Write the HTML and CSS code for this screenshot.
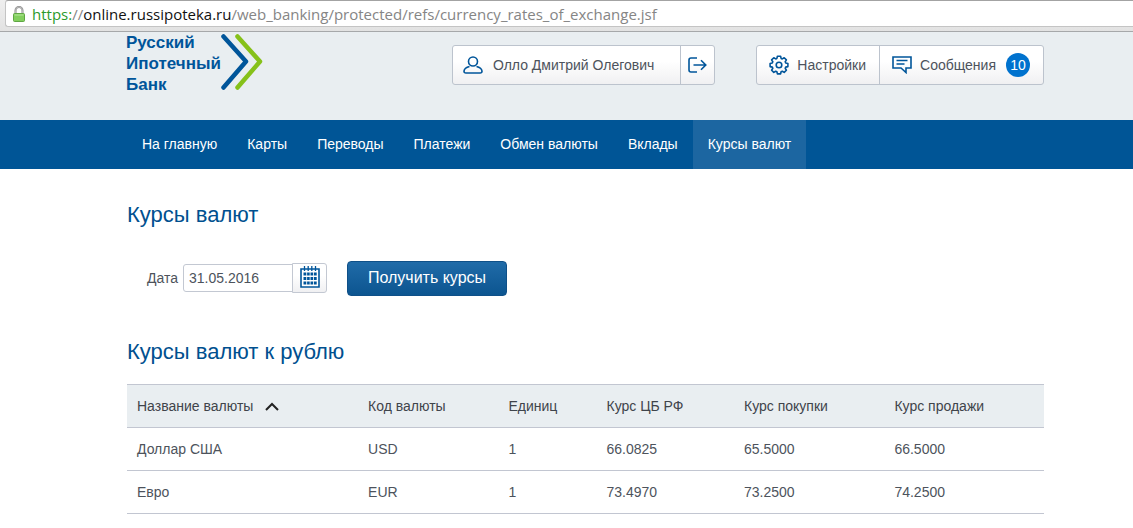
FILE: index.html
```html
<!DOCTYPE html>
<html lang="ru">
<head>
<meta charset="utf-8">
<title>Курсы валют</title>
<link rel="stylesheet" href="styles.css">
</head>
<body>
<div class="browser">
  <div class="address">
    <svg class="lock" width="12" height="16" viewBox="0 0 12 16" aria-hidden="true">
      <path d="M2.500 8V4.500a3.500 3.500 0 0 1 7 0V8" fill="none" stroke="#8b8b8b" stroke-width="2"/>
      <path d="M2.500 8V4.500a3.500 3.500 0 0 1 7 0V8" fill="none" stroke="#d8d8d8" stroke-width=".6"/>
      <rect x=".5" y="7.500" width="11" height="8" rx="1" fill="#82cf5e" stroke="#5fa643"/>
      <path d="M1.500 9h9" stroke="#b4e69a"/>
    </svg>
    <span class="url"><span class="scheme">https:</span>//<span class="host">online.russipoteka.ru</span>/web_banking/protected/refs/currency_rates_of_exchange.jsf</span>
  </div>
</div>

<header class="header">
  <a class="logo" href="#">
    <span class="logo-name">Русский<br>Ипотечный<br>Банк</span>
    <svg class="logo-mark" width="42" height="58" viewBox="0 0 42 58" aria-hidden="true">
      <g fill="none" stroke-width="4.500" stroke-linecap="round" stroke-linejoin="round">
        <path d="M16.500 4.500 39 29.500 16.500 55.500" stroke="#86c11a"/>
        <path d="M2.500 4.500 25 29.500 2.500 55.500" stroke="#00559a"/>
      </g>
    </svg>
  </a>
  <div class="tools">
    <div class="group">
      <button class="tool user" type="button">
        <svg width="20" height="18" viewBox="0 0 20 18" fill="none" stroke="#00559a" stroke-width="1.600" aria-hidden="true">
          <circle cx="10" cy="5.500" r="4.500"/>
          <path d="M6.500 10.500C3 11.300 1.300 12.700 1 15c-.1 1.200.7 2 1.900 2h14.200c1.200 0 2-.8 1.900-2-.3-2.300-2-3.700-5.500-4.500"/>
        </svg>
        <span>Олло Дмитрий Олегович</span>
      </button>
      <button class="tool exit" type="button" aria-label="Выйти">
        <svg width="20" height="16" viewBox="0 0 20 16" fill="none" stroke="#00559a" stroke-width="1.600" aria-hidden="true">
          <path d="M9 1H3Q1 1 1 3v10q0 2 2 2H9M5.500 8h12M13 3.200 17.800 8 13 12.800"/>
        </svg>
      </button>
    </div>
    <div class="group">
      <button class="tool settings" type="button">
        <svg width="20" height="20" viewBox="0 0 20 20" fill="none" stroke="#00559a" stroke-width="1.600" stroke-linejoin="round" aria-hidden="true">
          <circle cx="10" cy="10" r="2.800"/>
          <path d="M8.400 1.200h3.200l.5 2.200 1.200.5 1.900-1.200 2.200 2.200-1.200 1.900.5 1.200 2.200.5v3.100l-2.200.5-.5 1.200 1.200 1.900-2.200 2.200-1.900-1.200-1.200.5-.5 2.200H8.400l-.5-2.200-1.200-.5-1.900 1.200-2.200-2.200 1.200-1.900-.5-1.200-2.200-.5V8.500l2.200-.5.500-1.200-1.200-1.900 2.200-2.200 1.900 1.200 1.200-.5z"/>
        </svg>
        <span>Настройки</span>
      </button>
      <button class="tool messages" type="button">
        <svg width="20" height="18" viewBox="0 0 20 18" fill="none" stroke="#00559a" stroke-width="1.600" aria-hidden="true">
          <path d="M1 1h18v11h-5v4.500L9 12H1zM4.500 4.500h11M4.500 8h8"/>
        </svg>
        <span>Сообщения</span>
        <span class="badge">10</span>
      </button>
    </div>
  </div>
</header>

<nav class="nav">
  <a href="#">На главную</a>
  <a href="#">Карты</a>
  <a href="#">Переводы</a>
  <a href="#">Платежи</a>
  <a href="#">Обмен валюты</a>
  <a href="#">Вклады</a>
  <a class="active" href="#" aria-current="page">Курсы валют</a>
</nav>

<main class="content">
  <h1 class="title">Курсы валют</h1>
  <form class="filter">
    <label for="date">Дата</label>
    <div class="date-field">
      <input id="date" type="text" value="31.05.2016">
      <button class="calendar" type="button" aria-label="Открыть календарь">
        <svg width="20" height="22" viewBox="0 0 20 22" aria-hidden="true">
          <path d="M1 3h18v18H1z" fill="#fff" stroke="#00559a" stroke-width="1.600"/>
          <path d="M4.500 0v5M8.200 0v5M11.800 0v5M15.500 0v5" stroke="#00559a" stroke-width="1.300"/>
          <path d="M3.500 8h2.800M7.100 8h2.600M10.500 8h2.600M13.900 8h2.800M3.500 12.500h2.800M7.100 12.500h2.600M10.500 12.500h2.600M13.900 12.500h2.800M3.500 17h2.800M7.100 17h2.600M10.500 17h2.600M13.900 17h2.800" stroke="#00559a" stroke-width="3"/>
        </svg>
      </button>
    </div>
    <button class="submit" type="button">Получить курсы</button>
  </form>

  <h2 class="title">Курсы валют к рублю</h2>
  <table class="rates">
    <colgroup><col class="c-name"><col class="c-code"><col class="c-unit"><col class="c-cb"><col class="c-buy"><col></colgroup>
    <thead>
      <tr>
        <th scope="col" aria-sort="ascending">Название валюты
          <svg class="sort" width="14" height="9" viewBox="0 0 14 9" aria-hidden="true"><path d="M1 8l6-6 6 6" fill="none" stroke="#222" stroke-width="2"/></svg>
        </th>
        <th scope="col">Код валюты</th>
        <th scope="col">Единиц</th>
        <th scope="col">Курс ЦБ РФ</th>
        <th scope="col">Курс покупки</th>
        <th scope="col">Курс продажи</th>
      </tr>
    </thead>
    <tbody>
      <tr><td>Доллар США</td><td>USD</td><td>1</td><td>66.0825</td><td>65.5000</td><td>66.5000</td></tr>
      <tr><td>Евро</td><td>EUR</td><td>1</td><td>73.4970</td><td>73.2500</td><td>74.2500</td></tr>
    </tbody>
  </table>
</main>
</body>
</html>
```
FILE: styles.css
```css
* {
  box-sizing: border-box;
}

body {
  margin: 0;
  background: #fff;
  color: #4d535c;
  font: 14px/20px "Liberation Sans", Arial, sans-serif;
}

button,
input {
  margin: 0;
  font: inherit;
  color: inherit;
}

a {
  color: inherit;
  text-decoration: none;
}

svg {
  display: block;
  flex: none;
}

/* Browser address bar */
.browser {
  padding: 0 0 4px 5px;
  border-bottom: 1px solid #a6a8aa;
  background: linear-gradient(#efefef, #e2e2e2);
}

.address {
  display: flex;
  align-items: center;
  gap: 7px;
  height: 27px;
  padding-left: 7px;
  border: 1px solid #c4c4c4;
  border-top-color: #a3a3a3;
  border-right: 0;
  border-radius: 3px 0 0 3px;
  background: #fff;
}

.url {
  color: #858585;
  font: 15px/24px "Open Sans", "Noto Sans", sans-serif;
  white-space: nowrap;
}

.scheme {
  color: #2b9a2b;
}

.host {
  color: #111;
}

/* Header */
.header {
  display: flex;
  justify-content: space-between;
  align-items: flex-start;
  height: 88px;
  padding: 0 89px 0 126px;
  background: #e9eef1;
}

.logo {
  display: flex;
  color: #00559a;
}

.logo-name {
  width: 95px;
  font-size: 17px;
  font-weight: bold;
  line-height: 21px;
  white-space: nowrap;
}

.tools {
  display: flex;
  gap: 41px;
  padding-top: 13px;
}

.group {
  display: flex;
  height: 40px;
  border: 1px solid #bcc3cd;
  border-radius: 3px;
  background: linear-gradient(#fff 40%, #f0f0f2);
}

.tool {
  display: flex;
  align-items: center;
  padding: 0 12px;
  border: 0;
  background: none;
  white-space: nowrap;
}

.tool + .tool {
  border-left: 1px solid #bcc3cd;
}

.user {
  gap: 10px;
  padding: 0 26px 0 10px;
}

.exit {
  padding: 0 6px 0 7px;
}

.settings {
  gap: 8px;
  padding-right: 13px;
}

.messages {
  gap: 8px;
  padding-right: 13px;
}

.badge {
  width: 24px;
  height: 24px;
  margin-left: 2px;
  border-radius: 50%;
  background: #0072ce;
  color: #fff;
  line-height: 24px;
  text-align: center;
}

/* Navigation */
.nav {
  display: flex;
  padding: 0 89px 0 127px;
  background: #005596;
  color: #fff;
}

.nav a {
  padding: 14px 15px 15px;
  white-space: nowrap;
}

.nav .active {
  background: #1c66a1;
}

/* Content */
.content {
  padding: 32px 89px 14px 127px;
}

.title {
  margin: 0;
  color: #00508f;
  font-size: 22px;
  font-weight: normal;
  line-height: 28px;
}

.filter {
  display: flex;
  align-items: flex-start;
  height: 35px;
  margin: 32px 0 42px;
  padding-left: 20px;
}

.filter label {
  margin-right: 5px;
  padding-top: 7px;
}

.date-field {
  display: flex;
  align-items: center;
  margin-right: 20px;
  padding-top: 2px;
}

.date-field input {
  width: 110px;
  height: 28px;
  padding: 0 5px;
  border: 1px solid #c3c8d2;
  border-radius: 3px 0 0 3px;
  background: #fff;
}

.calendar {
  width: 35px;
  height: 30px;
  margin-left: -1px;
  padding: 0 0 2px 7px;
  border: 1px solid #c3c8d2;
  border-radius: 0 3px 3px 0;
  background: linear-gradient(#fff 40%, #f0f0f2);
}

.submit {
  width: 160px;
  height: 35px;
  padding: 0 0 2px;
  border: 1px solid #0f5088;
  border-radius: 4px;
  background: linear-gradient(#206ba8, #0c5590);
  color: #fff;
  font-size: 16px;
}

.rates {
  width: 100%;
  margin-top: 18px;
  border-collapse: collapse;
  border-top: 1px solid #c2c6d1;
  table-layout: fixed;
}

.c-name { width: 25.2%; }
.c-code { width: 15.3%; }
.c-unit { width: 10.7%; }
.c-cb { width: 15%; }
.c-buy { width: 16.4%; }

.rates th,
.rates td {
  height: 43px;
  padding: 0 10px;
  border-bottom: 1px solid #c2c6d1;
  font-weight: normal;
  text-align: left;
}

.rates th {
  background: #e9eef1;
  color: #3f444b;
}

.sort {
  display: inline-block;
  margin-left: 8px;
}
```
